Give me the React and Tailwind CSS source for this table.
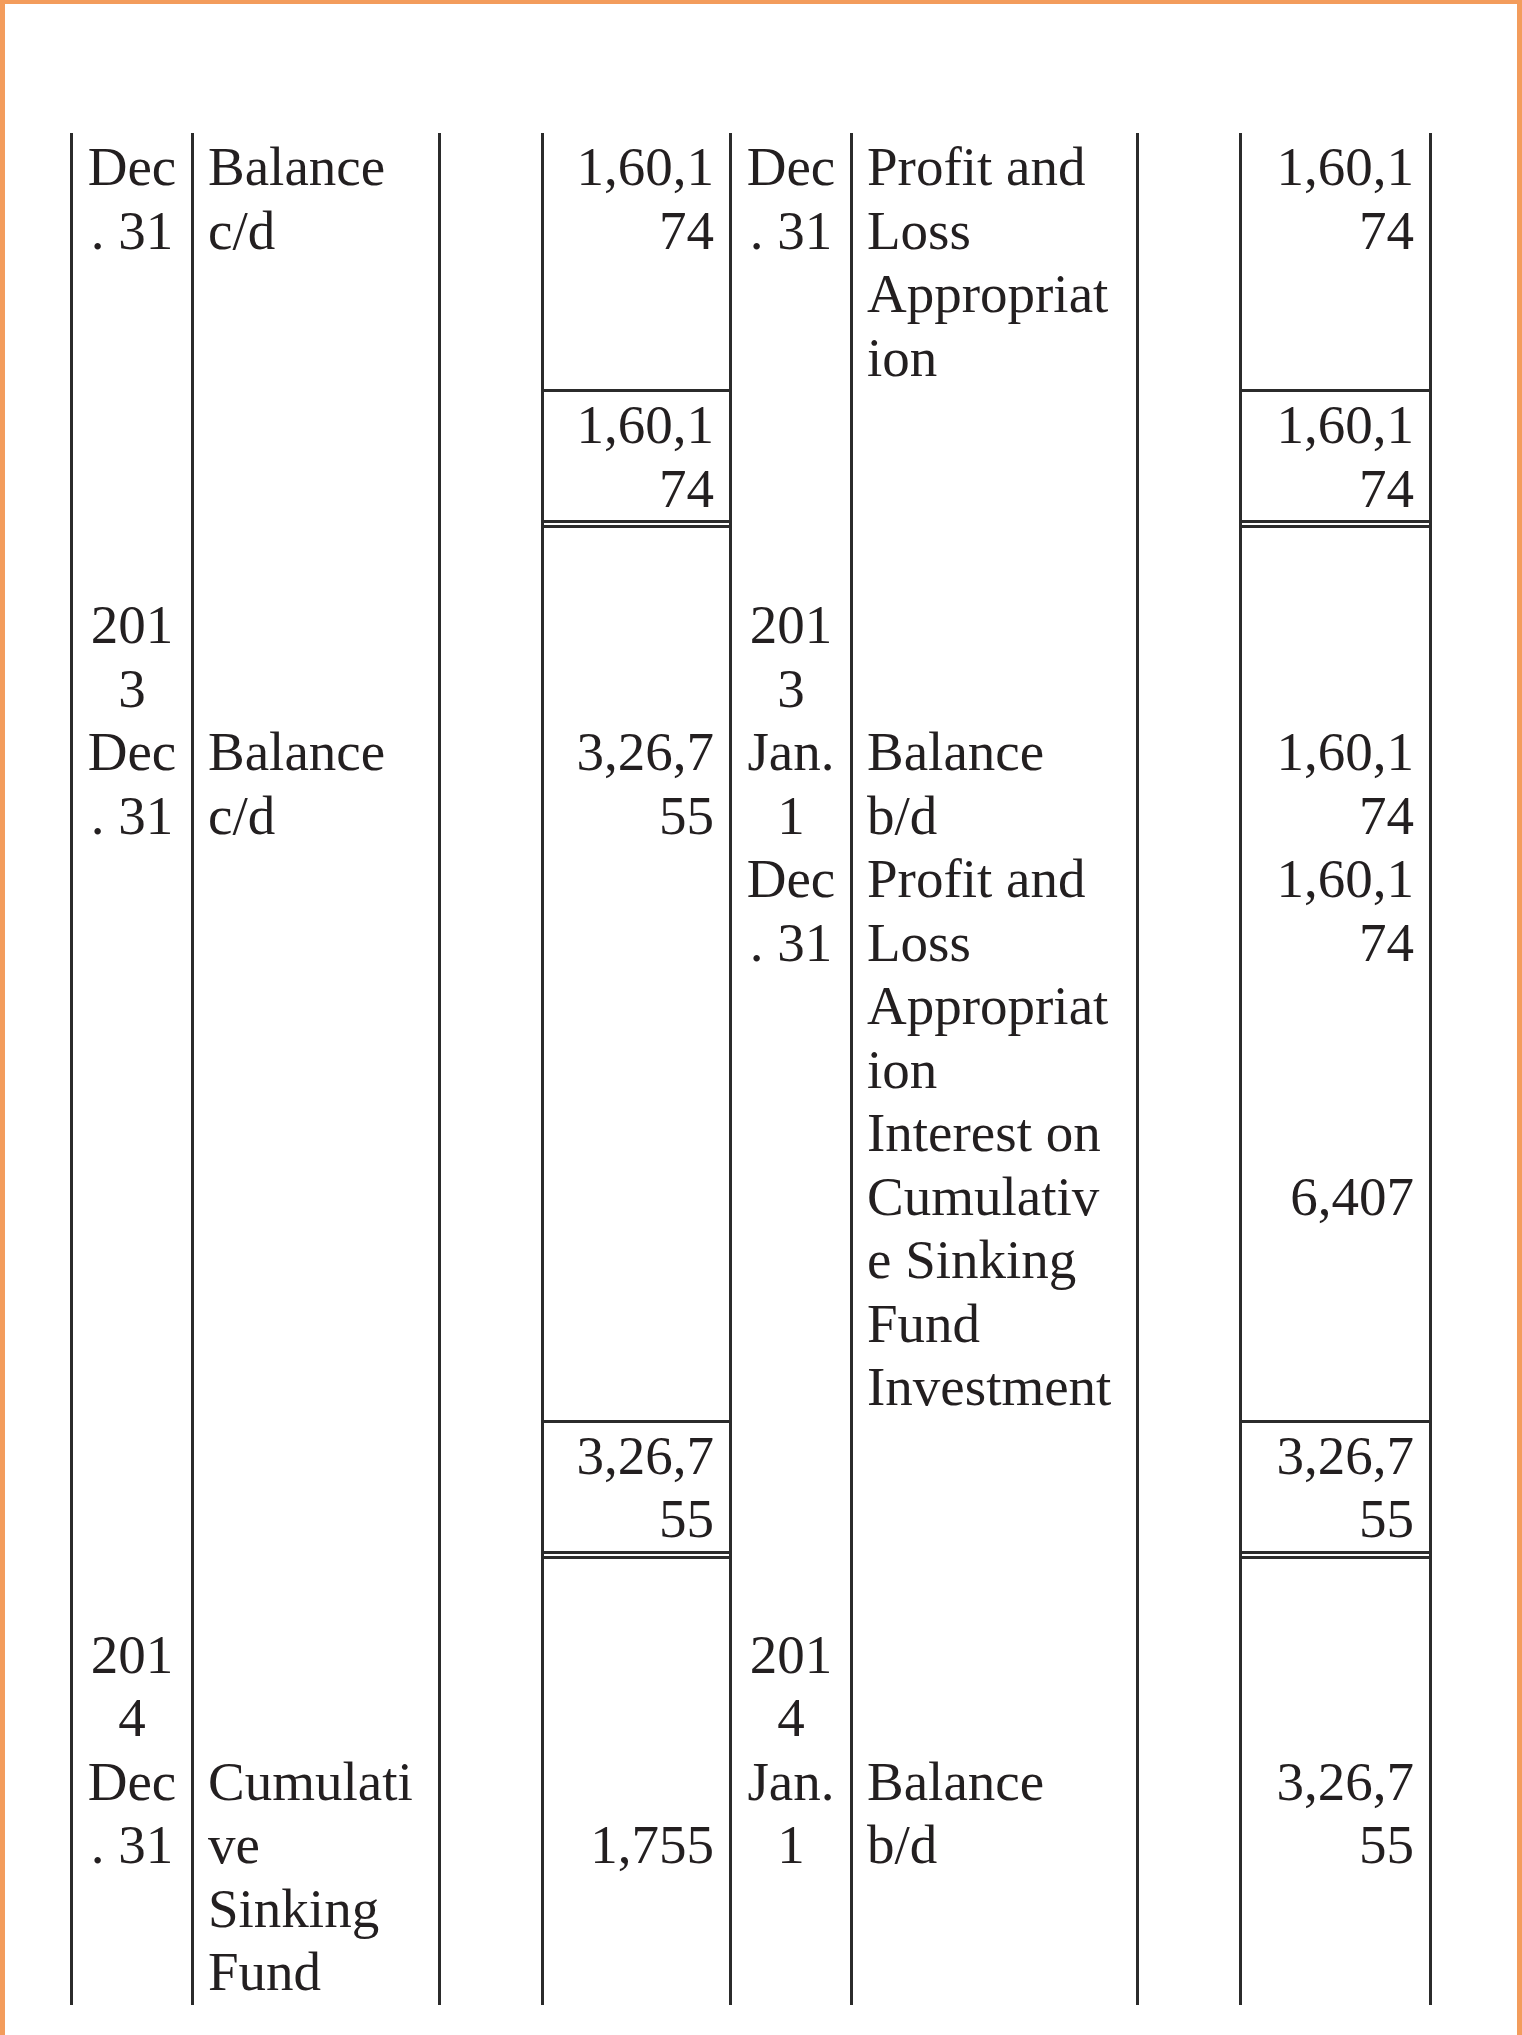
import React from 'react';

// ledger columns: Date | Particulars | J.F. | Amount  (Dr side, then Cr side)
const COLS = [
  { w: 'w-[121px]', pad: 'text-center' },
  { w: 'w-[247px]', pad: 'text-left pl-[14px]' },
  { w: 'w-[103px]', pad: '' },
  { w: 'w-[188px]', pad: 'text-right pr-[15px]' },
  { w: 'w-[121px]', pad: 'text-center' },
  { w: 'w-[286px]', pad: 'text-left pl-[14px]' },
  { w: 'w-[103px]', pad: '' },
  { w: 'w-[193px]', pad: 'text-right pr-[15px]' },
];

const Block = ({ cells, pt = '', pb = '' }) => (
  <div className="flex">
    {COLS.map((c, i) => (
      <div
        key={i}
        className={`${c.w} shrink-0 border-l-[3px] ${i === 7 ? 'border-r-[3px]' : ''} border-[#2b2b2b] ${c.pad} ${pt} ${pb}`}
      >
        {(cells[i] || []).map((t, j) => (
          <div key={j} className="h-[63.5px] leading-[63.5px] whitespace-pre">
            {t}
          </div>
        ))}
      </div>
    ))}
  </div>
);

const Rule = ({ double }) => (
  <div className={`flex ${double ? 'h-[8px]' : 'h-[3px]'}`}>
    {COLS.map((c, i) => (
      <div
        key={i}
        className={`${c.w} shrink-0 border-l-[3px] ${i === 7 ? 'border-r-[3px]' : ''} border-[#2b2b2b]`}
      >
        {(i === 3 || i === 7) &&
          (double ? (
            <div className="h-full border-y-[3px] border-[#2b2b2b]" />
          ) : (
            <div className="h-full bg-[#2b2b2b]" />
          ))}
      </div>
    ))}
  </div>
);

export default function App() {
  return (
    <div className="w-[1522px] h-[2035px] overflow-hidden bg-white border-t-[4px] border-x-[5px] border-[#f39c5c] pt-[129px] pl-[65px] font-['Liberation_Serif','Times_New_Roman',serif] text-[55px] text-[#231f20]">
      <div className="w-max">
        {/* 2012 closing */}
        <Block
          pt="pt-[2px]"
          cells={[
            ['Dec', '. 31'],
            ['Balance', 'c/d'],
            [],
            ['1,60,1', '74'],
            ['Dec', '. 31'],
            ['Profit and', 'Loss', 'Appropriat', 'ion'],
            [],
            ['1,60,1', '74'],
          ]}
        />
        <Rule />
        <Block
          pt="pt-[1px]"
          cells={[[], [], [], ['1,60,1', '74'], [], [], [], ['1,60,1', '74']]}
        />
        <Rule double />

        {/* 2013 */}
        <Block
          pt="pt-[1.5px]"
          pb="pb-[1.5px]"
          cells={[
            ['', '201', '3', 'Dec', '. 31'],
            ['', '', '', 'Balance', 'c/d'],
            [],
            ['', '', '', '3,26,7', '55'],
            ['', '201', '3', 'Jan.', '1', 'Dec', '. 31'],
            [
              '', '', '', 'Balance', 'b/d', 'Profit and', 'Loss', 'Appropriat', 'ion',
              'Interest on', 'Cumulativ', 'e Sinking', 'Fund', 'Investment',
            ],
            [],
            ['', '', '', '1,60,1', '74', '1,60,1', '74', '', '', '', '6,407'],
          ]}
        />
        <Rule />
        <Block
          pt="pt-[0.5px]"
          pb="pb-[0.5px]"
          cells={[[], [], [], ['3,26,7', '55'], [], [], [], ['3,26,7', '55']]}
        />
        <Rule double />

        {/* 2014 */}
        <Block
          pb="pb-[1.5px]"
          cells={[
            ['', '201', '4', 'Dec', '. 31'],
            ['', '', '', 'Cumulati', 've', 'Sinking', 'Fund'],
            [],
            ['', '', '', '', '1,755'],
            ['', '201', '4', 'Jan.', '1'],
            ['', '', '', 'Balance', 'b/d'],
            [],
            ['', '', '', '3,26,7', '55'],
          ]}
        />
      </div>
    </div>
  );
}
